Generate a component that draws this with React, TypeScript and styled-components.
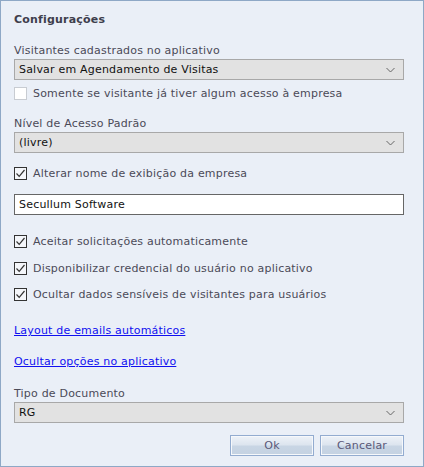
import React from "react";
import styled, { createGlobalStyle } from "styled-components";

const Global = createGlobalStyle`
  html, body { margin: 0; padding: 0; background: #eaeff7; }
  * { box-sizing: border-box; }
`;

const Dialog = styled.div`
  width: 424px;
  height: 467px;
  border: 1px solid #8ea8c6;
  background: #eaeff7;
  padding: 0 19px 0 13px;
  display: flex;
  flex-direction: column;
  font-family: "DejaVu Sans", sans-serif;
  font-size: 11px;
  letter-spacing: 0.2px;
  color: #4a4a58;
`;

const Title = styled.div`
  margin-top: 12px;
  line-height: 14px;
  font-weight: bold;
  color: #3e3e4c;
`;

const Label = styled.div<{ $mt: number }>`
  margin-top: ${(p) => p.$mt}px;
  line-height: 14px;
  height: 14px;
`;

const SelectBox = styled.div<{ $mt?: number }>`
  margin-top: ${(p) => p.$mt ?? 1}px;
  height: 21px;
  border: 1px solid #a8a8a8;
  background: #e2e2e2;
  display: flex;
  align-items: center;
  justify-content: space-between;
  padding: 0 8px 0 4px;
  color: #111;
  line-height: 19px;
`;

const Chevron = () => (
  <svg width="9" height="6" viewBox="0 0 9 6">
    <path d="M0.5 1 L4.5 5 L8.5 1" fill="none" stroke="#666" strokeWidth="1" />
  </svg>
);

const CheckRow = styled.div<{ $mt: number }>`
  margin-top: ${(p) => p.$mt}px;
  height: 13px;
  display: flex;
  align-items: center;
  gap: 6px;
  line-height: 13px;
`;

const Box = styled.span<{ $checked: boolean }>`
  width: 13px;
  height: 13px;
  flex: none;
  border: 1px solid ${(p) => (p.$checked ? "#333" : "#c8ccd2")};
  background: ${(p) => (p.$checked ? "#f4f6fa" : "#ffffff")};
  display: flex;
  align-items: center;
  justify-content: center;
`;

const Check = ({ checked, label, mt }: { checked: boolean; label: string; mt: number }) => (
  <CheckRow $mt={mt}>
    <Box $checked={checked}>
      {checked && (
        <svg width="11" height="11" viewBox="0 0 11 11">
          <path d="M1.5 5.5 L4.2 8.3 L9.5 2" fill="none" stroke="#333" strokeWidth="1.2" />
        </svg>
      )}
    </Box>
    <span>{label}</span>
  </CheckRow>
);

const TextInput = styled.div`
  margin-top: 14px;
  height: 21px;
  border: 1px solid #666;
  background: #fff;
  color: #111;
  padding: 0 4px;
  line-height: 19px;
  width: 390px;
`;

const Link = styled.a<{ $mt: number }>`
  margin-top: ${(p) => p.$mt}px;
  color: #1010f0;
  text-decoration: underline;
  line-height: 14px;
  align-self: flex-start;
  cursor: pointer;
`;

const Footer = styled.div`
  margin-top: 12px;
  display: flex;
  justify-content: flex-end;
  gap: 6px;
`;

const Button = styled.button`
  width: 84px;
  height: 21px;
  border: 1px solid #93acd0;
  background: linear-gradient(#eef2f8 0%, #dde5ef 45%, #c8d5e4 55%, #c4d2e2 100%);
  box-shadow: inset 0 0 0 1px #f6f8fb;
  font-family: inherit;
  font-size: 11px;
  letter-spacing: 0.2px;
  color: #5a5878;
  padding: 0;
  line-height: 19px;
`;

export default function App() {
  return (
    <>
      <Global />
      <Dialog>
        <Title>Configurações</Title>
        <Label $mt={17}>Visitantes cadastrados no aplicativo</Label>
        <SelectBox>
          <span>Salvar em Agendamento de Visitas</span>
          <Chevron />
        </SelectBox>
        <Check checked={false} mt={7} label="Somente se visitante já tiver algum acesso à empresa" />
        <Label $mt={17}>Nível de Acesso Padrão</Label>
        <SelectBox>
          <span>(livre)</span>
          <Chevron />
        </SelectBox>
        <Check checked={true} mt={14} label="Alterar nome de exibição da empresa" />
        <TextInput>Secullum Software</TextInput>
        <Check checked={true} mt={20} label="Aceitar solicitações automaticamente" />
        <Check checked={true} mt={14} label="Disponibilizar credencial do usuário no aplicativo" />
        <Check checked={true} mt={13} label="Ocultar dados sensíveis de visitantes para usuários" />
        <Link $mt={23}>Layout de emails automáticos</Link>
        <Link $mt={17}>Ocultar opções no aplicativo</Link>
        <Label $mt={18}>Tipo de Documento</Label>
        <SelectBox>
          <span>RG</span>
          <Chevron />
        </SelectBox>
        <Footer>
          <Button>Ok</Button>
          <Button>Cancelar</Button>
        </Footer>
      </Dialog>
    </>
  );
}
